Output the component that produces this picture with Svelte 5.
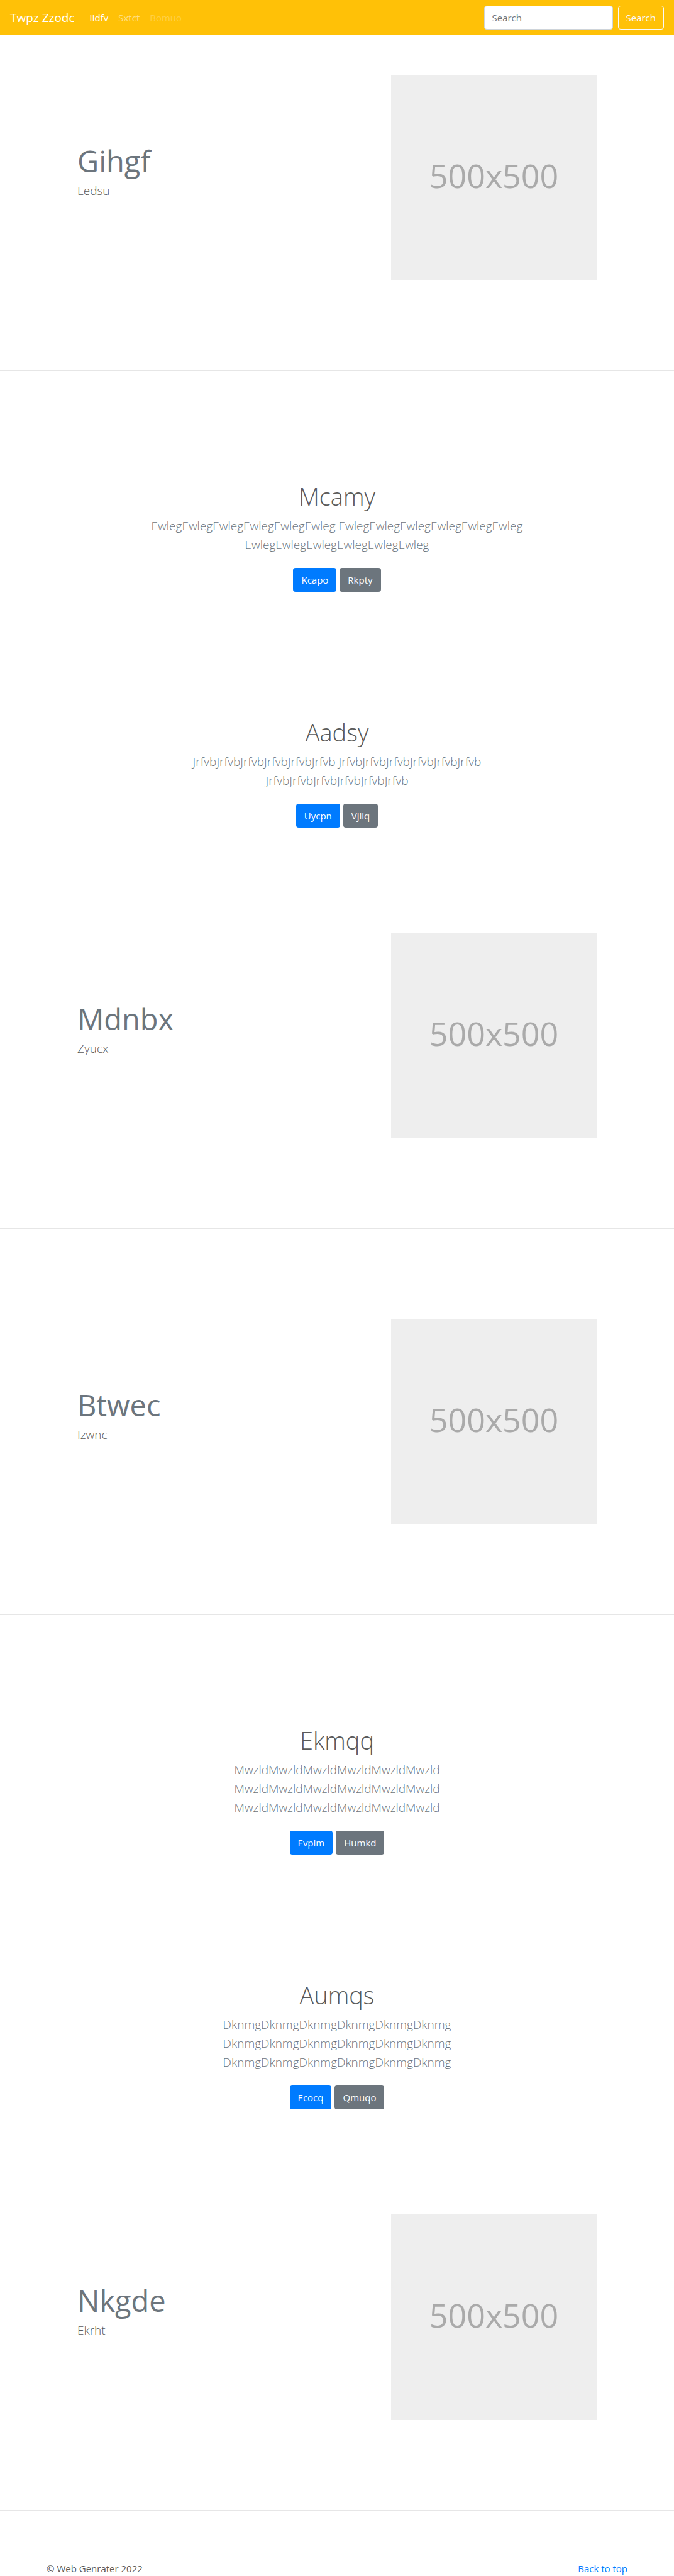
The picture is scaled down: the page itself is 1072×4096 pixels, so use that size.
<script>
  const intro = { title: 'Gihgf', text: 'Ledsu' };
  const firstHeroes = [
    {
      title: 'Mcamy',
      lines: ['EwlegEwlegEwlegEwlegEwlegEwleg EwlegEwlegEwlegEwlegEwlegEwleg', 'EwlegEwlegEwlegEwlegEwlegEwleg'],
      primary: 'Kcapo',
      secondary: 'Rkpty'
    },
    {
      title: 'Aadsy',
      lines: ['JrfvbJrfvbJrfvbJrfvbJrfvbJrfvb JrfvbJrfvbJrfvbJrfvbJrfvbJrfvb', 'JrfvbJrfvbJrfvbJrfvbJrfvbJrfvb'],
      primary: 'Uycpn',
      secondary: 'Vjliq'
    }
  ];
  const middle = [
    { title: 'Mdnbx', text: 'Zyucx' },
    { title: 'Btwec', text: 'Izwnc' }
  ];
  const lastHeroes = [
    {
      title: 'Ekmqq',
      lines: Array(3).fill('MwzldMwzldMwzldMwzldMwzldMwzld'),
      primary: 'Evplm',
      secondary: 'Humkd'
    },
    {
      title: 'Aumqs',
      lines: Array(3).fill('DknmgDknmgDknmgDknmgDknmgDknmg'),
      primary: 'Ecocq',
      secondary: 'Qmuqo'
    }
  ];
  const closing = { title: 'Nkgde', text: 'Ekrht' };
</script>

{#snippet feature(item, first)}
  <section class="feature" class:first>
    <div class="row">
      <div class="copy">
        <h2>{item.title}</h2>
        <p class="lead">{item.text}</p>
      </div>
      <div class="placeholder" role="img" aria-label="Placeholder 500x500">500x500</div>
    </div>
  </section>
  <hr />
{/snippet}

{#snippet hero(item)}
  <section class="hero">
    <h1>{item.title}</h1>
    <p class="lead">
      {#each item.lines as line}<span>{line}</span>{/each}
    </p>
    <div class="actions">
      <a class="btn primary" href="#primary">{item.primary}</a>
      <a class="btn secondary" href="#secondary">{item.secondary}</a>
    </div>
  </section>
{/snippet}

<header id="top">
  <a class="brand" href="#top">Twpz Zzodc</a>
  <nav>
    <a class="active" href="#home">Iidfv</a>
    <a href="#link">Sxtct</a>
    <a class="disabled" href="#disabled" aria-disabled="true">Bomuo</a>
  </nav>
  <form onsubmit={(e) => e.preventDefault()}>
    <input type="search" placeholder="Search" aria-label="Search" />
    <button type="submit">Search</button>
  </form>
</header>

<main>
  {@render feature(intro, true)}
  {#each firstHeroes as item}{@render hero(item)}{/each}
  {#each middle as item}{@render feature(item, false)}{/each}
  {#each lastHeroes as item}{@render hero(item)}{/each}
  {@render feature(closing, false)}
</main>

<footer>
  <p>© Web Genrater 2022</p>
  <a href="#top">Back to top</a>
</footer>

<style>
  :global(body) {
    background: #fff;
    color: #5a5a5a;
    font-family: 'Open Sans', 'Noto Sans', sans-serif;
    font-size: 15px;
    line-height: 24px;
  }

  h1,
  h2,
  p {
    margin: 0;
  }

  a {
    text-decoration: none;
  }

  header {
    display: flex;
    align-items: center;
    height: 56px;
    padding: 0 16px;
    box-sizing: border-box;
    background: #ffc107;
  }

  .brand {
    color: #fff;
    font-size: 19px;
  }

  nav {
    display: flex;
    flex: 1;
    gap: 16px;
    padding-left: 24px;
  }

  nav a {
    color: rgba(255, 255, 255, 0.5);
  }

  nav .active {
    color: #fff;
  }

  nav .disabled {
    color: rgba(255, 255, 255, 0.25);
  }

  form {
    display: flex;
    gap: 8px;
  }

  input,
  button {
    height: 38px;
    box-sizing: border-box;
    border-radius: 4px;
    font: inherit;
  }

  input {
    width: 205px;
    padding: 0 12px;
    border: 1px solid #ced4da;
    background: #fff;
    color: #495057;
  }

  input::placeholder {
    color: #6c757d;
    opacity: 1;
  }

  button {
    padding: 0 12px;
    border: 1px solid #f8f9fa;
    background: transparent;
    color: #f8f9fa;
  }

  .feature {
    padding: 143px 16px;
  }

  .feature.first {
    padding-top: 63px;
  }

  .row {
    display: grid;
    grid-template-columns: 1fr 327px;
    max-width: 826px;
    margin: 0 auto;
  }

  .copy {
    padding-top: 111px;
  }

  h2 {
    margin-bottom: 6px;
    color: #6c757d;
    font-size: 47px;
    font-weight: 400;
    line-height: 52px;
  }

  .lead {
    font-size: 19px;
    font-weight: 300;
    line-height: 30px;
  }

  .placeholder {
    display: grid;
    place-items: center;
    aspect-ratio: 1;
    padding-bottom: 8px;
    box-sizing: border-box;
    background: #eee;
    color: #aaa;
    font-size: 52px;
  }

  hr {
    height: 1px;
    margin: 0;
    border: 0;
    background: #e6e6e6;
  }

  .hero {
    padding: 175px 16px 24px;
    text-align: center;
  }

  .hero h1 {
    margin-bottom: 8px;
    font-size: 38px;
    font-weight: 300;
    line-height: 48px;
  }

  .hero .lead {
    color: #6c757d;
  }

  .hero .lead span {
    display: block;
  }

  .actions {
    display: flex;
    justify-content: center;
    gap: 5px;
    padding-top: 22px;
  }

  .btn {
    padding: 7px 13px;
    border-radius: 4px;
    color: #fff;
  }

  .primary {
    background: #007bff;
  }

  .secondary {
    background: #6c757d;
  }

  footer {
    display: flex;
    justify-content: space-between;
    max-width: 924px;
    margin: 0 auto;
    padding: 80px 16px 0;
  }

  footer a {
    color: #007bff;
  }
</style>
